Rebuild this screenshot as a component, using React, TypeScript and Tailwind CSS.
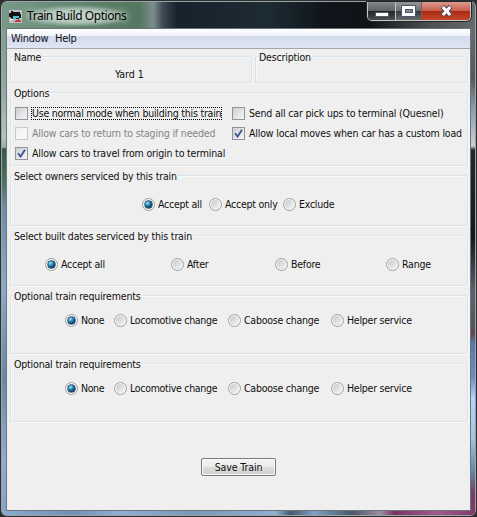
import React from "react";

function Radio({ label, on, w = "", t = "tracking-[-0.24px]" }: { label: string; on?: boolean; w?: string; t?: string }) {
  return (
    <label className={`flex shrink-0 items-center ${w}`}>
      <span className="flex h-[13px] w-[13px] shrink-0 items-center justify-center rounded-full border border-[#9b9ea1] bg-[#f8f8f8]">
        {on ? (
          <span className="h-[9px] w-[9px] rounded-full border border-[#3d6078] bg-[radial-gradient(circle_at_35%_30%,#b8ecff_0%,#3a9dcb_28%,#0d4b76_62%,#0a2c4b_100%)]" />
        ) : (
          <span className="h-[9px] w-[9px] rounded-full bg-linear-to-br from-[#c4c8cc] to-[#f6f6f6]" />
        )}
      </span>
      <span className={`ml-[3px] ${t}`}>{label}</span>
    </label>
  );
}

function Check({ label, on, off, focus, t = "tracking-[-0.17px]" }: { label: string; on?: boolean; off?: boolean; focus?: boolean; t?: string }) {
  return (
    <label className="flex h-[20px] items-center">
      <span
        className={`h-[13px] w-[13px] shrink-0 border bg-linear-to-br p-px ${
          off ? "border-[#c9cacb] from-[#f0f0f0] to-[#fafafa]" : "border-[#929496] from-[#cbcfd5] to-[#f7f7f7]"
        }`}
      >
        {on && (
          <svg viewBox="0 0 9 9" className="block h-[9px] w-[9px]">
            <path d="M1 4.2 3.6 7.5 8 .8" fill="none" stroke="#3d5290" strokeWidth="1.8" />
          </svg>
        )}
      </span>
      <span
        className={`ml-[3px] h-[13px] border border-dotted leading-[11px] ${focus ? "border-black" : "border-transparent"} ${
          off ? "text-[#858585]" : ""
        } ${t}`}
      >
        {label}
      </span>
    </label>
  );
}

function Group({ title, className, children }: { title: string; className: string; children?: React.ReactNode }) {
  return (
    <section className={`rounded-[2px] border border-[#d9e3eb] shadow-[inset_1px_1px_0_#f8fafb,1px_1px_0_#f7f9fa] ${className}`}>
      <h2 className="-mt-[6px] ml-[2px] flex h-[13px] w-max items-center bg-[#efefef] px-px tracking-[-0.17px]">{title}</h2>
      {children}
    </section>
  );
}

function Requirements({ className }: { className: string }) {
  return (
    <Group title="Optional train requirements" className={className}>
      <div className="mt-[11px] ml-[54px] flex">
        <Radio label="None" on w="w-[49px]" t="tracking-[-0.4px]" />
        <Radio label="Locomotive change" w="w-[114px]" t="tracking-[-0.3px]" />
        <Radio label="Caboose change" w="w-[103px]" />
        <Radio label="Helper service" />
      </div>
    </Group>
  );
}

function TrainIcon() {
  return (
    <svg viewBox="0 0 13 13" className="mt-[2px] ml-[7px] h-[13px] w-[13px]">
      <rect width="13" height="13" fill="#c3bcc0" />
      <path d="M0 3h2V1h2v1h3V2h4v2h1v4h-2v1H3L1 7H0z" fill="#101418" />
      <path d="M4 6h6v2H7v1H4z" fill="#48c4c8" />
      <path d="M5 12l2-2h2l1-1 2 2v1z" fill="#b83a44" />
      <path d="M1 9h3v1H1z" fill="#fff" />
    </svg>
  );
}

function WindowButtons() {
  return (
    <div className="mr-[4px] flex h-[19px] w-[104px] self-start overflow-hidden rounded-b-[5px] border border-t-0 border-[#c4c4c4] shadow-[0_0_0_1px_#25282b]">
      <div className="flex w-[28px] items-center justify-center border-r border-[#c4c4c4] bg-[linear-gradient(#84888a_0%,#606466_48%,#1e2224_50%,#4c5053_100%)]">
        <span className="mt-[6px] h-[5px] w-[14px] rounded-[1px] border border-[#55585c] bg-white" />
      </div>
      <div className="flex w-[26px] items-center justify-center border-r border-[#8c5a50] bg-[linear-gradient(#93979a_0%,#6d7174_48%,#33373a_50%,#666a6d_100%)]">
        <span className="flex h-[12px] w-[15px] items-center justify-center rounded-[1px] border border-[#505468] bg-white">
          <span className="h-[4px] w-[8px] border border-[#505468] bg-[#85888c]" />
        </span>
      </div>
      <div className="flex flex-1 items-center justify-center bg-[linear-gradient(#d99a8c_0%,#c8604d_48%,#a92a14_50%,#c6452a_100%)]">
        <svg viewBox="0 0 13 12" className="h-[12px] w-[13px]">
          <path d="M2.4 1.6 10.6 10.4M10.6 1.6 2.4 10.4" stroke="#4d4658" strokeWidth="5" />
          <path d="M2.8 2 10.2 10M10.2 2 2.8 10" stroke="#fff" strokeWidth="3" />
        </svg>
      </div>
    </div>
  );
}

export default function App() {
  return (
    <div className="h-[517px] w-[477px] overflow-hidden bg-[#2b2f32] p-px font-['DejaVu_Sans_Condensed','DejaVu_Sans',sans-serif] text-[10.5px] leading-[13px] whitespace-nowrap text-[#101010]">
      <div className="flex h-[515px] flex-col rounded-[6px] border border-[#b5c4c0]/80 bg-[linear-gradient(90deg,#779a88_0%,#5b8069_20%,#557660_29%,#7c8c8e_32%,#3c4a52_34%,#17222c_37%,#1d2b33_56%,#10151b_68%,#101318_78%,#4b4e50_90%,#67696b_100%)] bg-clip-padding">
        <header className="flex h-[26px] items-center">
          <TrainIcon />
          <h1 className="mt-[2px] ml-[1px] rounded-full px-[4px] font-['Noto_Sans',sans-serif] text-[12px] leading-[22px] tracking-[-0.44px] text-black bg-[radial-gradient(ellipse_closest-side,#c6d6cd_0%,#b4c8bcd0_60%,#a0b9ab00_100%)] [text-shadow:0_0_6px_#d2dfd8,0_0_8px_#d2dfd8]">
            Train Build Options
          </h1>
          <div className="flex-1" />
          <WindowButtons />
        </header>
        <div className="flex min-h-0 flex-1">
          <div className="w-[4px] shrink-0 bg-[linear-gradient(#7d9f8d_0px,#90aba0_60px,#b4c5be_110px,#9ab0a6_119px,#355b49_121px,#4a7560_155px,#708cad_180px,#8ba9cb_260px,#6a86a8_350px,#90acd0_430px,#86a3c8_100%)]" />
          <main className="flex h-[483px] flex-1 flex-col border border-[#6c7678] bg-[#efefef]">
            <nav className="flex h-[20px] shrink-0 items-center border-b border-[#a6a6a6] bg-[linear-gradient(#ffffff_0%,#eff2f9_35%,#d3daec_40%,#dfe5f4_100%)] pl-[4px] text-[11px]">
              <span className="w-[44px] tracking-[-0.3px]">Window</span>
              <span className="tracking-[-0.3px]">Help</span>
            </nav>
            <div className="flex flex-1 flex-col pt-[7px] pr-[2px] pl-[3px]">
              <div className="flex gap-[3px]">
                <Group title="Name" className="h-[27px] w-[242px]">
                  <p className="mt-[4px] pl-[104px]">Yard 1</p>
                </Group>
                <Group title="Description" className="h-[27px] flex-1" />
              </div>
              <Group title="Options" className="mt-[9px] h-[74px]">
                <div className="mt-[3px] ml-[4px] grid grid-cols-[217px_1fr]">
                  <Check label="Use normal mode when building this train" focus t="tracking-[-0.22px]" />
                  <Check label="Send all car pick ups to terminal (Quesnel)" />
                  <Check label="Allow cars to return to staging if needed" off />
                  <Check label="Allow local moves when car has a custom load" on />
                  <Check label="Allow cars to travel from origin to terminal" on />
                </div>
              </Group>
              <Group title="Select owners serviced by this train" className="mt-[9px] h-[51px]">
                <div className="mt-[15px] ml-[131px] flex">
                  <Radio label="Accept all" on w="w-[67px]" />
                  <Radio label="Accept only" w="w-[74px]" />
                  <Radio label="Exclude" />
                </div>
              </Group>
              <Group title="Select built dates serviced by this train" className="mt-[9px] h-[51px]">
                <div className="mt-[15px] ml-[34px] flex">
                  <Radio label="Accept all" on w="w-[126px]" />
                  <Radio label="After" w="w-[104px]" />
                  <Radio label="Before" w="w-[111px]" />
                  <Radio label="Range" />
                </div>
              </Group>
              <Requirements className="mt-[9px] h-[59px]" />
              <Requirements className="mt-[9px] h-[59px]" />
              <button className="mt-[36px] ml-[191px] h-[18px] w-[75px] rounded-[2px] border border-[#7b7b7b] bg-[linear-gradient(#f4f4f4_0%,#ebebeb_48%,#dcdcdc_52%,#cfcfcf_100%)] leading-[16px] tracking-[-0.1px] shadow-[inset_0_0_0_1px_#fafafa]">
                Save Train
              </button>
            </div>
          </main>
          <div className="w-[4px] shrink-0 bg-[linear-gradient(#6a6c6e_0px,#53575c_50px,#8d9aaa_80px,#c9d0d8_118px,#202831_122px,#111a23_210px,#62606f_265px,#565360_298px,#6e4048_305px,#5878a8_315px,#6c90c4_350px,#b0d8ff_370px,#a4c4e8_410px,#6680a8_445px,#7a3a64_465px,#8a3a68_100%)]" />
        </div>
        <footer className="h-[4px] shrink-0 rounded-b-[5px] bg-[linear-gradient(90deg,#8aabd0_0%,#7391b5_15%,#8fb0d6_25%,#7b98b8_40%,#8db0d4_58%,#46586c_61%,#7ea2c8_66%,#4b5668_74%,#9d8fa8_80%,#7c3160_83%,#a25a8e_92%,#803a6a_100%)]" />
      </div>
    </div>
  );
}
